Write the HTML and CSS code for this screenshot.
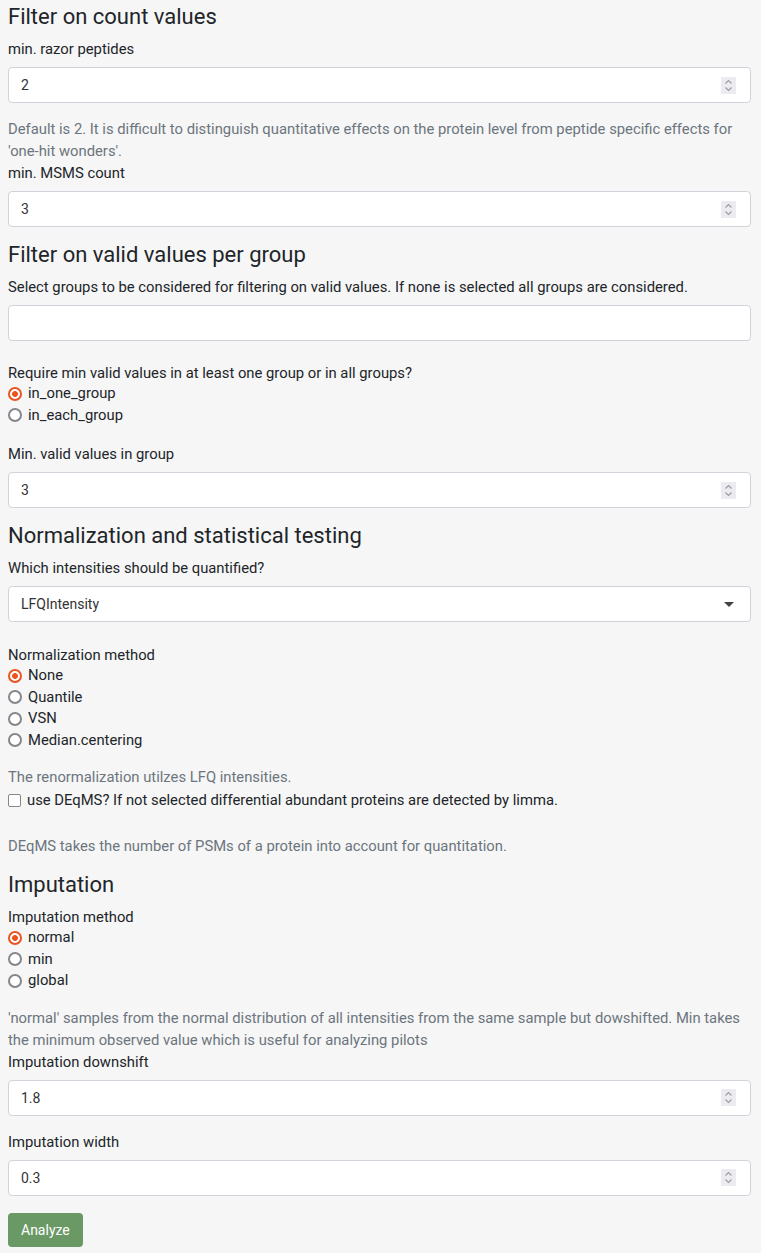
FILE: index.html
```html
<!DOCTYPE html>
<html>
<head>
<meta charset="utf-8">
<link rel="stylesheet" href="styles.css">
</head>
<body>
<div class="page">
  <h3 class="heading first">Filter on count values</h3>
  <div class="label">min. razor peptides</div>
  <div class="field num"><span class="val">2</span><span class="spin"><svg width="9" height="13" viewBox="0 0 9 13"><path d="M1.5 4.5 L4.5 1.5 L7.5 4.5" fill="none" stroke="#9a9aa2" stroke-width="1.1"/><path d="M1.5 8.5 L4.5 11.5 L7.5 8.5" fill="none" stroke="#9a9aa2" stroke-width="1.1"/></svg></span></div>
  <p class="help gap-help">Default is 2. It is difficult to distinguish quantitative effects on the protein level from peptide specific effects for 'one-hit wonders'.</p>
  <div class="label">min. MSMS count</div>
  <div class="field num"><span class="val">3</span><span class="spin"><svg width="9" height="13" viewBox="0 0 9 13"><path d="M1.5 4.5 L4.5 1.5 L7.5 4.5" fill="none" stroke="#9a9aa2" stroke-width="1.1"/><path d="M1.5 8.5 L4.5 11.5 L7.5 8.5" fill="none" stroke="#9a9aa2" stroke-width="1.1"/></svg></span></div>

  <h3 class="heading">Filter on valid values per group</h3>
  <div class="label">Select groups to be considered for filtering on valid values. If none is selected all groups are considered.</div>
  <div class="field"></div>
  <div class="label gap-21 tight">Require min valid values in at least one group or in all groups?</div>
  <div class="radios">
    <div class="opt"><span class="radio on"></span>in_one_group</div>
    <div class="opt"><span class="radio"></span>in_each_group</div>
  </div>
  <div class="label gap-17">Min. valid values in group</div>
  <div class="field num"><span class="val">3</span><span class="spin"><svg width="9" height="13" viewBox="0 0 9 13"><path d="M1.5 4.5 L4.5 1.5 L7.5 4.5" fill="none" stroke="#9a9aa2" stroke-width="1.1"/><path d="M1.5 8.5 L4.5 11.5 L7.5 8.5" fill="none" stroke="#9a9aa2" stroke-width="1.1"/></svg></span></div>

  <h3 class="heading">Normalization and statistical testing</h3>
  <div class="label">Which intensities should be quantified?</div>
  <div class="field num"><span class="val">LFQIntensity</span><span class="caret"></span></div>
  <div class="label gap-22 tight">Normalization method</div>
  <div class="radios">
    <div class="opt"><span class="radio on"></span>None</div>
    <div class="opt"><span class="radio"></span>Quantile</div>
    <div class="opt"><span class="radio"></span>VSN</div>
    <div class="opt"><span class="radio"></span>Median.centering</div>
  </div>
  <p class="help gap-15">The renormalization utilzes LFQ intensities.</p>
  <div class="check-line"><span class="checkbox"></span>use DEqMS? If not selected differential abundant proteins are detected by limma.</div>
  <p class="help gap-24">DEqMS takes the number of PSMs of a protein into account for quantitation.</p>

  <h3 class="heading">Imputation</h3>
  <div class="label tight">Imputation method</div>
  <div class="radios">
    <div class="opt"><span class="radio on"></span>normal</div>
    <div class="opt"><span class="radio"></span>min</div>
    <div class="opt"><span class="radio"></span>global</div>
  </div>
  <p class="help gap-15">'normal' samples from the normal distribution of all intensities from the same sample but dowshifted. Min takes the minimum observed value which is useful for analyzing pilots</p>
  <div class="label">Imputation downshift</div>
  <div class="field num"><span class="val">1.8</span><span class="spin"><svg width="9" height="13" viewBox="0 0 9 13"><path d="M1.5 4.5 L4.5 1.5 L7.5 4.5" fill="none" stroke="#9a9aa2" stroke-width="1.1"/><path d="M1.5 8.5 L4.5 11.5 L7.5 8.5" fill="none" stroke="#9a9aa2" stroke-width="1.1"/></svg></span></div>
  <div class="label gap-help">Imputation width</div>
  <div class="field num"><span class="val">0.3</span><span class="spin"><svg width="9" height="13" viewBox="0 0 9 13"><path d="M1.5 4.5 L4.5 1.5 L7.5 4.5" fill="none" stroke="#9a9aa2" stroke-width="1.1"/><path d="M1.5 8.5 L4.5 11.5 L7.5 8.5" fill="none" stroke="#9a9aa2" stroke-width="1.1"/></svg></span></div>
  <button class="btn">Analyze</button>
</div>
</body>
</html>
```

FILE: styles.css
```css
html, body {
  margin: 0;
  padding: 0;
  background: #f6f6f6;
}
body {
  font-family: Roboto, "Liberation Sans", sans-serif;
  font-size: 14.8px;
  line-height: 22px;
  color: #212529;
}
.page {
  padding: 0 10px 0 8px;
  display: flex;
  flex-direction: column;
  align-items: stretch;
}
.heading {
  font-size: 22px;
  font-weight: 400;
  line-height: 26px;
  margin: 15px 0 8px 0;
  color: #212529;
}
.heading.first {
  margin-top: 4px;
}
.label {
  margin: 0 0 7px 0;
}
.label.tight {
  margin-bottom: -1px;
}
.field {
  height: 36px;
  box-sizing: border-box;
  border: 1px solid #ced4da;
  border-radius: 4px;
  background: #fff;
  display: flex;
  align-items: center;
  justify-content: space-between;
  padding: 0 14px 0 12px;
  font-size: 14px;
  color: #333;
}
.spin {
  width: 15px;
  height: 17px;
  background: #ebebf0;
  display: flex;
  align-items: center;
  justify-content: center;
}
.caret {
  width: 0;
  height: 0;
  border-left: 5px solid transparent;
  border-right: 5px solid transparent;
  border-top: 5px solid #444;
  margin-right: 2px;
}
.help {
  margin: 0;
  color: #6c757d;
}
.gap-help { margin-top: 15px; }
.gap-15 { margin-top: 15px; }
.gap-17 { margin-top: 17px; }
.gap-21 { margin-top: 21px; }
.gap-22 { margin-top: 22px; }
.gap-24 { margin-top: 24px; }
.opt {
  display: flex;
  align-items: center;
  line-height: 21.5px;
}
.radio {
  width: 14px;
  height: 14px;
  box-sizing: border-box;
  border: 2px solid #85858c;
  border-radius: 50%;
  background: #fff;
  margin-right: 6px;
  flex: none;
}
.radio.on {
  border: 2px solid #e95420;
  background: radial-gradient(circle, #e95420 0 2.6px, #fff 3.2px);
}
.check-line {
  display: flex;
  align-items: center;
  margin-top: 1px;
}
.checkbox {
  width: 13px;
  height: 13px;
  box-sizing: border-box;
  border: 1.5px solid #85858c;
  border-radius: 2px;
  background: #fff;
  margin-right: 6px;
  flex: none;
}
.btn {
  align-self: flex-start;
  margin-top: 17px;
  height: 34px;
  padding: 0 13px;
  background: #6a9966;
  color: #fff;
  border: none;
  border-radius: 4px;
  font-family: Roboto, "Liberation Sans", sans-serif;
  font-size: 14px;
}
```
